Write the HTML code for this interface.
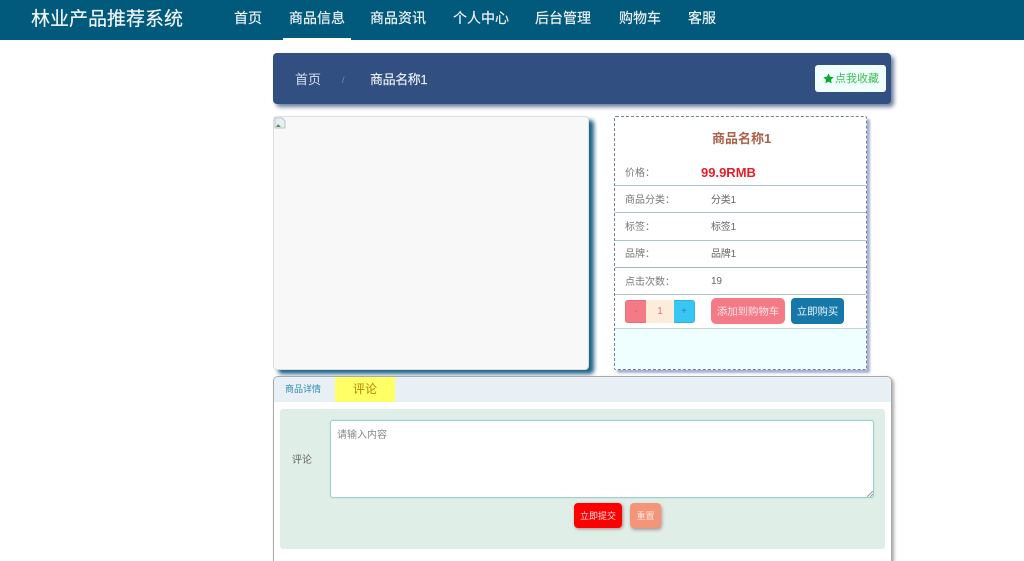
<!DOCTYPE html>
<html lang="zh">
<head>
<meta charset="utf-8">
<title>林业产品推荐系统</title>
<style>
html,body{margin:0;padding:0;background:#fff;width:1024px;height:561px;overflow:hidden;}
#w{position:relative;width:1024px;height:561px;overflow:hidden;font-family:"Liberation Sans","Noto Sans CJK SC",sans-serif;filter:blur(0.35px);}
div,span{box-sizing:border-box;}
.a{position:absolute;}
.t{position:absolute;white-space:nowrap;line-height:1;}
.c{display:flex;align-items:center;justify-content:center;white-space:nowrap;}
.nav{color:#f2f7fa;font-size:14px;top:11px;-webkit-text-stroke:0.15px #f2f7fa;}
.lab{color:#777;font-size:10px;left:625px;}
.val{color:#666;font-size:10px;left:711px;letter-spacing:-0.2px;}
.sep{position:absolute;left:615px;width:251px;height:1px;background:#a9c6cc;}
</style>
</head>
<body>
<div id="w">
<div class="a" style="left:0;top:0;width:1024px;height:40px;background:#01597c;"></div>
<div class="t" style="left:31px;top:10px;font-size:19px;color:#f4f8fa;-webkit-text-stroke:0.15px #f4f8fa;">林业产品推荐系统</div>
<div class="t nav" style="left:234px;">首页</div>
<div class="t nav" style="left:289px;">商品信息</div>
<div class="a" style="left:283px;top:38px;width:68px;height:2px;background:#fff;"></div>
<div class="t nav" style="left:370px;">商品资讯</div>
<div class="t nav" style="left:453px;">个人中心</div>
<div class="t nav" style="left:535px;">后台管理</div>
<div class="t nav" style="left:619px;">购物车</div>
<div class="t nav" style="left:688px;">客服</div>

<div class="a" style="left:273px;top:53px;width:618px;height:51px;background:#314f80;border-radius:4px;box-shadow:3px 3px 4px #6f7f9f;"></div>
<div class="t" style="left:295px;top:73px;font-size:13px;color:#d9e0ea;">首页</div>
<div class="t" style="left:342px;top:76px;font-size:9px;color:#7c8fae;">/</div>
<div class="t" style="left:370px;top:73px;font-size:13px;color:#eef1f5;letter-spacing:-0.4px;-webkit-text-stroke:0.15px #eef1f5;">商品名称1</div>
<div class="a" style="left:815px;top:65px;width:71px;height:27px;background:#f0fffe;border-radius:3px;"></div>
<svg class="a" style="left:823px;top:73px;" width="11" height="11" viewBox="0 0 24 24"><path d="M12 1l3.4 7.3 7.9 1-5.8 5.4 1.5 7.9-7-3.9-7 3.9 1.5-7.9L.7 9.3l7.9-1z" fill="#0aa82e"/></svg>
<div class="t" style="left:835px;top:73px;font-size:11px;line-height:11px;color:#3cbf4f;transform:translateY(1px);">点我收藏</div>

<div class="a" style="left:273px;top:116px;width:316px;height:254px;background:#f8f8f8;border:1px solid #dedede;border-radius:4px;box-shadow:5px 4px 4px #1f6389;"></div>
<svg class="a" style="left:274px;top:117px;" width="12" height="12" viewBox="0 0 12 12"><path d="M1 1h7l3 3v7H1z" fill="#e8eef4" stroke="#b9c2ca" stroke-width="1"/><path d="M2 10l2-3 2 2 1 1z" fill="#4c9a4c"/></svg>

<div class="a" style="left:614px;top:116px;width:253px;height:254px;background:#fff;border:1px dashed #6e8292;border-radius:2px;box-shadow:3px 3px 2px #a5b2d2;"></div>
<div class="a" style="left:615px;top:328px;width:251px;height:41px;background:#efffff;"></div>
<div class="t" style="left:712px;top:132px;font-size:13px;font-weight:bold;color:#aa5f49;">商品名称1</div>
<div class="t lab" style="top:169px;">价格：</div>
<div class="t" style="left:701px;top:166px;font-size:13px;font-weight:bold;color:#e3202a;">99.9RMB</div>
<div class="sep" style="top:185px;"></div>
<div class="t lab" style="top:196px;">商品分类：</div><div class="t val" style="top:196px;">分类1</div>
<div class="sep" style="top:212px;"></div>
<div class="t lab" style="top:223px;">标签：</div><div class="t val" style="top:223px;">标签1</div>
<div class="sep" style="top:240px;"></div>
<div class="t lab" style="top:250px;">品牌：</div><div class="t val" style="top:250px;">品牌1</div>
<div class="sep" style="top:267px;background:#9fb5ba;"></div>
<div class="t lab" style="top:278px;">点击次数：</div><div class="t val" style="top:277px;">19</div>
<div class="sep" style="top:294px;background:#b4c4c4;"></div>
<div class="sep" style="top:328px;background:#c9d2d2;"></div>

<div class="a c" style="left:625px;top:300px;width:21px;height:23px;background:#f47a86;border:1px solid #e56f7c;border-right:0;border-radius:3px 0 0 3px;font-size:10px;color:#c9606b;">-</div>
<div class="a c" style="left:646px;top:300px;width:28px;height:23px;background:#fdecd9;font-size:10px;color:#d9757f;">1</div>
<div class="a c" style="left:674px;top:300px;width:21px;height:23px;background:#38c6f4;border:1px solid #30b2dd;border-left:0;border-radius:0 3px 3px 0;font-size:10px;color:#2b88ae;">+</div>
<div class="a c" style="left:711px;top:298px;width:74px;height:26px;background:#f47a88;border-radius:5px;font-size:10.4px;color:#fde4e6;padding-bottom:2px;">添加到购物车</div>
<div class="a c" style="left:791px;top:298px;width:53px;height:26px;background:#1678a8;border-radius:4px;font-size:10.4px;color:#e8f4fa;padding-bottom:2px;">立即购买</div>

<div class="a" style="left:273px;top:376px;width:619px;height:200px;background:#fff;border:1px solid #a9a9a9;border-radius:5px;box-shadow:2px 2px 3px #a8a8a8;"></div>
<div class="a" style="left:274px;top:377px;width:617px;height:25px;background:#e8f0f6;border-radius:4px 4px 0 0;"></div>
<div class="t" style="left:285px;top:385px;font-size:9px;color:#2d8cb0;">商品详情</div>
<div class="a" style="left:335px;top:377px;width:60px;height:25px;background:#ffff66;"></div>
<div class="t" style="left:353px;top:383px;font-size:12px;color:#b8860b;">评论</div>

<div class="a" style="left:280px;top:409px;width:605px;height:140px;background:#e0eee8;border-radius:3px;"></div>
<div class="t" style="left:292px;top:456px;font-size:10px;color:#666;">评论</div>
<div class="a" style="left:330px;top:420px;width:544px;height:78px;background:#fff;border:1px solid #9fd0d0;border-radius:3px;box-shadow:0 0 1px #8fc4c8;"></div>
<div class="t" style="left:337px;top:431px;font-size:10px;color:#888;">请输入内容</div>
<svg class="a" style="left:867px;top:491px;" width="6" height="6" viewBox="0 0 6 6"><path d="M0 6L6 0M3 6L6 3" stroke="#999" stroke-width="1" fill="none"/></svg>
<div class="a c" style="left:574px;top:503px;width:48px;height:25px;background:#fe0000;border-radius:4px;font-size:9px;color:#ffe6e6;box-shadow:1px 1px 3px #a88;">立即提交</div>
<div class="a c" style="left:630px;top:503px;width:31px;height:25px;background:#f49479;border-radius:4px;font-size:9px;color:#fde8e0;box-shadow:1px 2px 3px #a99;">重置</div>
</div>
</body>
</html>
